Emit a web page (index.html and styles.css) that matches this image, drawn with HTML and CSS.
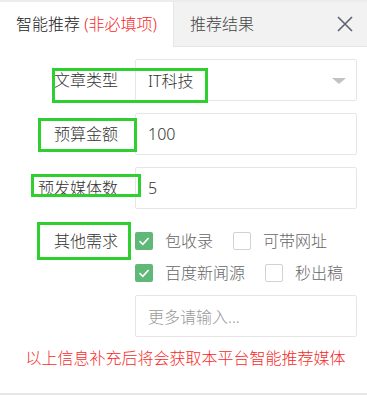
FILE: index.html
```html
<!DOCTYPE html>
<html lang="zh">
<head>
<meta charset="utf-8">
<link rel="stylesheet" href="styles.css">
</head>
<body>
<div class="panel">
  <div class="tabs">
    <div class="tab tab-active">智能推荐 <span class="red">(非必填项)</span></div>
    <div class="tab tab-other">
      <span>推荐结果</span>
      <svg class="close" width="16" height="16" viewBox="0 0 16 16"><path d="M1 1 L15 15 M15 1 L1 15" stroke="#5b6270" stroke-width="1.6" fill="none"/></svg>
    </div>
  </div>
  <div class="form">
    <div class="row">
      <div class="label">文章类型</div>
      <div class="field select"><span class="val">IT科技</span><span class="arrow"></span></div>
    </div>
    <div class="row">
      <div class="label">预算金额</div>
      <div class="field"><span class="val">100</span></div>
    </div>
    <div class="row">
      <div class="label">预发媒体数</div>
      <div class="field"><span class="val">5</span></div>
    </div>
    <div class="row row-top">
      <div class="label label-line">其他需求</div>
      <div class="opts">
        <div class="opt-line">
          <span class="cb on"><svg width="18" height="18" viewBox="0 0 18 18"><path d="M4.5 9.2 L7.8 12.3 L13.6 6" stroke="#fff" stroke-width="1.6" fill="none"/></svg></span><span class="opt-text">包收录</span>
          <span class="cb"></span><span class="opt-text">可带网址</span>
        </div>
        <div class="opt-line">
          <span class="cb on"><svg width="18" height="18" viewBox="0 0 18 18"><path d="M4.5 9.2 L7.8 12.3 L13.6 6" stroke="#fff" stroke-width="1.6" fill="none"/></svg></span><span class="opt-text">百度新闻源</span>
          <span class="cb"></span><span class="opt-text">秒出稿</span>
        </div>
        <div class="field more"><span class="ph">更多请输入...</span></div>
      </div>
    </div>
    <p class="notice">以上信息补充后将会获取本平台智能推荐媒体</p>
  </div>
  <div class="mark m1"></div>
  <div class="mark m2"></div>
  <div class="mark m3"></div>
  <div class="mark m4"></div>
</div>
</body>
</html>
```
FILE: styles.css
```css
* { box-sizing: border-box; }
body {
  margin: 0;
  font-family: "Noto Sans", "Noto Sans CJK SC", sans-serif;
  font-weight: 300;
  color: #333;
  background: #fff;
}
.panel {
  position: relative;
  width: 367px;
  height: 395px;
  border-top: 2px solid #ececec;
  border-bottom: 2px solid #e6e6e6;
}
.tabs {
  display: flex;
  height: 45px;
}
.tab {
  font-size: 16px;
  line-height: 44px;
  padding-left: 16px;
}
.tab-active {
  width: 173px;
  background: #fff;
  color: #222;
}
.tab-other {
  flex: 1;
  display: flex;
  align-items: center;
  justify-content: space-between;
  background: #f2f2f2;
  border-left: 1px solid #e6e6e6;
  border-bottom: 1px solid #e6e6e6;
  padding-right: 14px;
  color: #444;
}
.close { display: block; margin-top: -1px; }
.red { color: #f62a2a; }
.form {
  padding-top: 12px;
}
.row {
  display: flex;
  align-items: center;
  margin-bottom: 12px;
}
.row-top { align-items: flex-start; margin-bottom: 0; }
.label {
  width: 118px;
  text-align: right;
  font-size: 16px;
  color: #333;
  margin-right: 17px;
  line-height: 22px;
}
.label-line {
  margin-top: 4px;
  line-height: 32px;
}
.field {
  position: relative;
  width: 222px;
  height: 42px;
  border: 1px solid #e6e6e6;
  border-radius: 2px;
  display: flex;
  align-items: center;
  padding-left: 12px;
  font-size: 16px;
  color: #333;
}
.arrow {
  position: absolute;
  right: 10px;
  top: 18px;
  width: 0;
  height: 0;
  border-left: 7px solid transparent;
  border-right: 7px solid transparent;
  border-top: 6px solid #c2c2c2;
}
.opts {
  padding-top: 4px;
}
.opt-line {
  display: flex;
  align-items: center;
  height: 32px;
}
.cb {
  width: 18px;
  height: 18px;
  border: 1px solid #d2d2d2;
  border-radius: 2px;
  background: #fff;
  margin-right: 12px;
  display: block;
}
.cb.on {
  border: none;
  background: #5fb878;
}
.cb svg { display: block; }
.opt-text {
  font-size: 16px;
  color: #666;
  margin-right: 20px;
  line-height: 22px;
}
.more { margin-top: 6px; }
.ph { color: #9a9a9a; }
.notice {
  margin: 10px 0 0;
  text-align: center;
  color: #f62a2a;
  font-size: 16px;
  line-height: 22px;
  padding-left: 4px;
}
.mark {
  position: absolute;
  border: 3px solid #2fcf2f;
}
.m1 { left: 52px; top: 66px; width: 156px; height: 35px; }
.m2 { left: 38px; top: 116px; width: 99px; height: 34px; }
.m3 { left: 31px; top: 172px; width: 110px; height: 23px; }
.m4 { left: 37px; top: 220px; width: 94px; height: 38px; }
```
